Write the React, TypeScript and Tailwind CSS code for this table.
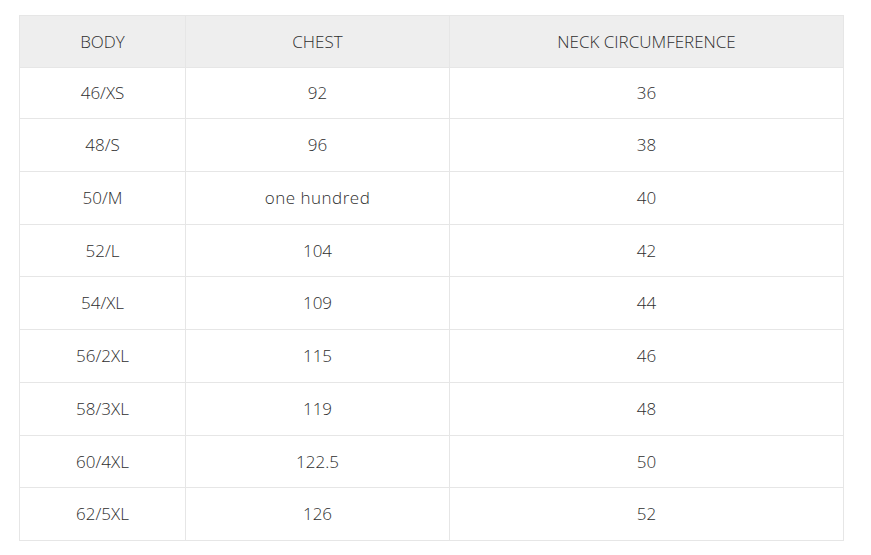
import React from "react";

const rows: [string, string, string][] = [
  ["46/XS", "92", "36"],
  ["48/S", "96", "38"],
  ["50/M", "one hundred", "40"],
  ["52/L", "104", "42"],
  ["54/XL", "109", "44"],
  ["56/2XL", "115", "46"],
  ["58/3XL", "119", "48"],
  ["60/4XL", "122.5", "50"],
  ["62/5XL", "126", "52"],
];

export default function App() {
  return (
    <div className="w-[871px] h-[555px] bg-white pt-[15px] pl-[19px]" style={{ fontFamily: '"Open Sans", sans-serif' }}>
      <table className="w-[825px] border-collapse text-[17px] font-light text-[#2e2e2e]">
        <thead>
          <tr className="bg-[#eeeeee] h-[52px]">
            <th className="w-[166px] border border-[#e6e6e6] font-light text-center align-middle">BODY</th>
            <th className="w-[264px] border border-[#e6e6e6] font-light text-center align-middle">CHEST</th>
            <th className="border border-[#e6e6e6] font-light text-center align-middle">NECK CIRCUMFERENCE</th>
          </tr>
        </thead>
        <tbody>
          {rows.map((r, i) => (
            <tr key={r[0]} className={i === 0 ? "h-[51px]" : "h-[52.75px]"}>
              <td className="border border-[#e6e6e6] text-center align-middle">{r[0]}</td>
              <td className={"border border-[#e6e6e6] text-center align-middle" + (r[1] === "one hundred" ? " tracking-[0.5px]" : "")}>{r[1]}</td>
              <td className="border border-[#e6e6e6] text-center align-middle">{r[2]}</td>
            </tr>
          ))}
        </tbody>
      </table>
    </div>
  );
}
